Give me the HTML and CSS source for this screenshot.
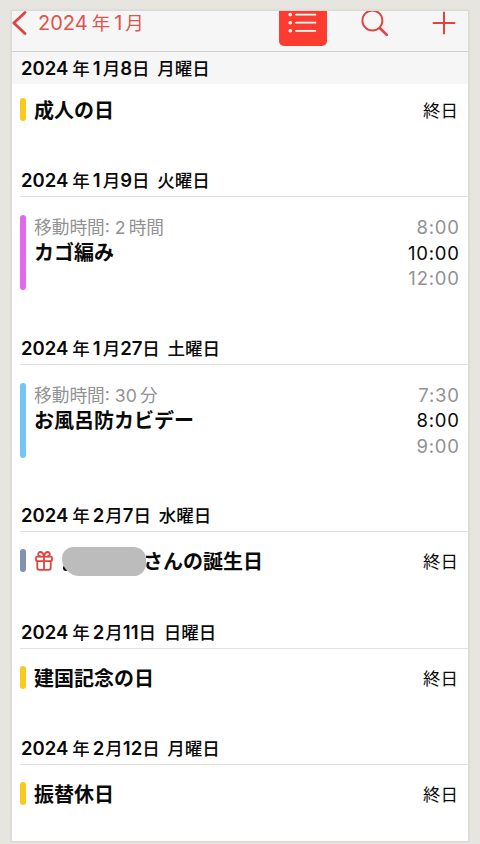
FILE: index.html
```
<!DOCTYPE html>
<html lang="ja">

<head>
    <meta charset="UTF-8">
    <meta name="viewport" content="width=device-width, initial-scale=1.0">
    <title>カレンダー</title>
    <link rel="stylesheet" href="styles.css">
</head>

<body>
    <main class="screen">
        <!-- Navigation bar -->
        <header class="navbar">
            <div class="back">
                <svg class="chevron" width="15" height="26" viewBox="0 0 15 26"><path d="M13 1.5 1.8 12 13 22.5" /></svg>
                <span class="back-label"><span class="num">2024</span>年<span class="num one">1</span>月</span>
            </div>
            <div class="actions">
                <div class="list-button">
                    <svg width="48" height="36" viewBox="0 0 48 36">
                        <path d="M17 3.6h19.5M17 11.7h19.5M17 19.8h19.5" />
                        <circle cx="11.2" cy="3.6" r="1.8" />
                        <circle cx="11.2" cy="11.7" r="1.8" />
                        <circle cx="11.2" cy="19.8" r="1.8" />
                    </svg>
                </div>
                <svg class="search" width="28" height="28" viewBox="0 0 28 28"><circle cx="11.4" cy="9.5" r="10" /><path class="handle" d="m19 17.3 6.8 6.6" /></svg>
                <svg class="plus" width="24" height="24" viewBox="0 0 24 24"><path d="M12 1.5v21M1.5 12h21" /></svg>
            </div>
        </header>

        <!-- Event list -->
        <section class="day current">
            <h2 class="date"><span class="num">2024</span>年<span class="num one">1</span>月<span class="num">8</span>日 月曜日</h2>
            <div class="event">
                <span class="bar yellow"></span>
                <span class="title">成人の日</span>
                <span class="allday">終日</span>
            </div>
        </section>

        <section class="day tall">
            <h2 class="date"><span class="num">2024</span>年<span class="num one">1</span>月<span class="num">9</span>日 火曜日</h2>
            <div class="event travel">
                <span class="bar pink"></span>
                <div class="details">
                    <p class="note">移動時間: <span class="num">2</span>時間</p>
                    <p class="title">カゴ編み</p>
                </div>
                <div class="times">
                    <span>8:00</span>
                    <span class="start">10:00</span>
                    <span>12:00</span>
                </div>
            </div>
        </section>

        <section class="day tall">
            <h2 class="date"><span class="num">2024</span>年<span class="num one">1</span>月<span class="num">27</span>日 土曜日</h2>
            <div class="event travel">
                <span class="bar blue"></span>
                <div class="details">
                    <p class="note">移動時間: <span class="num">30</span>分</p>
                    <p class="title">お風呂防カビデー</p>
                </div>
                <div class="times">
                    <span>7:30</span>
                    <span class="start">8:00</span>
                    <span>9:00</span>
                </div>
            </div>
        </section>

        <section class="day">
            <h2 class="date"><span class="num">2024</span>年<span class="num two">2</span>月<span class="num">7</span>日 水曜日</h2>
            <div class="event">
                <span class="bar slate"></span>
                <svg class="gift" width="18" height="20" viewBox="0 0 18 20">
                    <rect x="1" y="5.6" width="16" height="4.6" rx="1.2" />
                    <path d="M2.3 10.2v6.6q0 2 2 2h9.4q2 0 2-2v-6.6M9 5.6v13.2M9 5.6C8.4 2.4 7 1 5.3 1 2.5 1 2.4 5.6 5.7 5.6M9 5.6C9.6 2.4 11 1 12.7 1c2.8 0 2.9 4.6-.4 4.6" />
                </svg>
                <span class="person"><span class="mask"></span></span>
                <span class="title">さんの誕生日</span>
                <span class="allday">終日</span>
            </div>
        </section>

        <section class="day">
            <h2 class="date"><span class="num">2024</span>年<span class="num two">2</span>月<span class="num">11</span>日 日曜日</h2>
            <div class="event">
                <span class="bar yellow"></span>
                <span class="title">建国記念の日</span>
                <span class="allday">終日</span>
            </div>
        </section>

        <section class="day">
            <h2 class="date"><span class="num">2024</span>年<span class="num two">2</span>月<span class="num">12</span>日 月曜日</h2>
            <div class="event">
                <span class="bar yellow"></span>
                <span class="title">振替休日</span>
                <span class="allday">終日</span>
            </div>
        </section>
    </main>
</body>

</html>
```
FILE: styles.css
```
* {
    box-sizing: border-box;
}

body {
    margin: 0;
    height: 844px;
    padding: 11px 12px 3px;
    overflow: hidden;
    background-color: #e6e5df;
    font-family: Inter, "Noto Sans CJK JP", sans-serif;
    color: #0a0a0a;
}

h2,
p {
    margin: 0;
}

svg {
    display: block;
    fill: none;
    stroke: #e0443c;
    stroke-linecap: round;
    stroke-linejoin: round;
}

.screen {
    width: 456px;
    height: 830px;
    overflow: hidden;
    background-color: #fff;
    box-shadow: 0 0 2px 1px #d3d3d0;
}

/* Navigation bar */
.navbar {
    display: flex;
    justify-content: space-between;
    height: 41px;
    background-color: #f6f6f6;
    border-bottom: 1px solid #cfcfcf;
}

.back {
    display: flex;
    gap: 11px;
}

.chevron {
    stroke-width: 2.8;
}

.back-label {
    font-size: 18.5px;
    line-height: 24px;
    color: #e0534b;
    white-space: nowrap;
}

.back-label .num {
    font-size: 20px;
}

.back-label .one {
    margin: 0 3px 0 4px;
}

.actions {
    display: flex;
    padding-right: 12px;
}

.list-button {
    width: 48px;
    height: 35px;
    margin-right: 34px;
    border-radius: 0 0 5px 5px;
    background-color: #fd3b2f;
}

.list-button svg {
    stroke: #fff;
    stroke-width: 1.7;
}

.list-button circle {
    fill: #fff;
    stroke: none;
}

.search {
    margin-right: 43px;
    stroke-width: 1.9;
}

.search .handle {
    stroke-width: 2.7;
}

.plus {
    stroke-width: 2;
}

/* Days */
.day {
    height: 116.5px;
}

.day.current {
    height: 112px;
}

.day.tall {
    height: 167.7px;
}

.date {
    height: 33px;
    margin-left: 8px;
    padding-left: 1px;
    border-bottom: 1px solid #e1e1e1;
    font-size: 17.5px;
    font-weight: 500;
    line-height: 32px;
    word-spacing: 3px;
    white-space: nowrap;
}

.date .num {
    font-size: 18.5px;
    font-weight: 600;
}

.date .one {
    margin: 0 2px 0 3px;
}

.date .two {
    margin: 0 1px 0 3px;
}

.current .date {
    height: 32px;
    margin-left: 0;
    padding-left: 9px;
    background-color: #f6f6f6;
    border-bottom: 0;
}

.num:first-child {
    margin-right: 4px;
}

.note .num {
    margin-right: 3px;
}

/* Events */
.event {
    display: flex;
    align-items: center;
    height: 57px;
    padding: 0 10px 0 8px;
}

.current .event {
    height: 51px;
}

.bar {
    width: 6px;
    height: 23px;
    margin-right: 8px;
    border-radius: 3px;
}

.yellow {
    background-color: #f7cb1b;
}

.pink {
    background-color: #e368ef;
}

.blue {
    background-color: #74c5f6;
}

.slate {
    background-color: #8292b2;
}

.title {
    font-size: 20px;
    font-weight: 600;
    line-height: 26px;
    white-space: nowrap;
}

.event > .title {
    padding-top: 3px;
}

.allday {
    margin-left: auto;
    font-size: 17.5px;
}

.travel {
    align-items: flex-start;
    height: 112px;
    padding-top: 18px;
    padding-right: 9px;
}

.travel .bar {
    height: 75px;
}

.note {
    font-size: 17.7px;
    line-height: 25px;
    color: #929294;
}

.times {
    display: flex;
    flex-direction: column;
    margin-left: auto;
    margin-right: -0.8px;
    font-size: 18.5px;
    letter-spacing: 0.8px;
    line-height: 25.6px;
    text-align: right;
    color: #929294;
}

.times .start {
    color: #0a0a0a;
}

/* Birthday */
.gift {
    margin: 0 9px 0 1px;
    stroke-width: 1.8;
}

.person {
    position: relative;
    width: 81px;
    height: 28px;
}

.person::before {
    content: "";
    position: absolute;
    left: 1px;
    top: 18px;
    width: 6px;
    height: 6px;
    border-radius: 3px;
    background-color: #0a0a0a;
}

.mask {
    position: absolute;
    left: 0;
    top: 0;
    z-index: 1;
    width: 84px;
    height: 29px;
    border-radius: 13px 14px 14px 20px;
    background-color: #bcbcbc;
}
```
